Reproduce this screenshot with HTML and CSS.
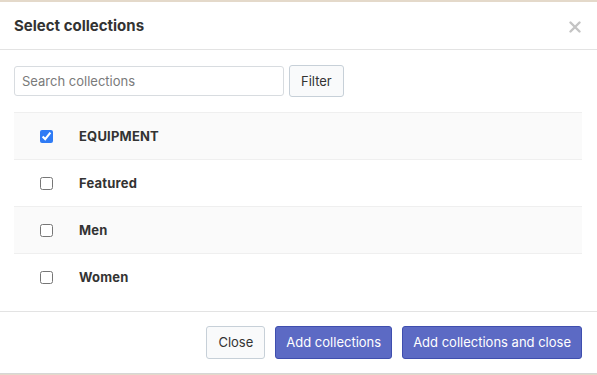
FILE: index.html
```html
<!DOCTYPE html>
<html lang="en">
  <head>
    <meta charset="UTF-8" />
    <meta name="viewport" content="width=device-width, initial-scale=1.0" />
    <title>Select collections</title>
    <link rel="stylesheet" href="styles.css">
  </head>
  <body>
    <div class="modal">
      <div class="modal-header">
        <h2 class="modal-title">Select collections</h2>
        <button class="modal-close" aria-label="Close">
          <svg width="12" height="12" viewBox="0 0 12 12">
            <path d="M1.5 1.5 L10.5 10.5 M10.5 1.5 L1.5 10.5" stroke="#c4c4c4" stroke-width="2.4" stroke-linecap="round" />
          </svg>
        </button>
      </div>

      <div class="modal-body">
        <div class="search-row">
          <input type="text" class="search-input" placeholder="Search collections" />
          <button class="btn">Filter</button>
        </div>

        <table class="collections">
          <tbody>
            <tr>
              <td class="check-cell"><input type="checkbox" checked /></td>
              <td class="name-cell">EQUIPMENT</td>
            </tr>
            <tr>
              <td class="check-cell"><input type="checkbox" /></td>
              <td class="name-cell">Featured</td>
            </tr>
            <tr>
              <td class="check-cell"><input type="checkbox" /></td>
              <td class="name-cell">Men</td>
            </tr>
            <tr>
              <td class="check-cell"><input type="checkbox" /></td>
              <td class="name-cell">Women</td>
            </tr>
          </tbody>
        </table>
      </div>

      <div class="modal-footer">
        <button class="btn">Close</button>
        <button class="btn btn-primary">Add collections</button>
        <button class="btn btn-primary">Add collections and close</button>
      </div>
    </div>
  </body>
</html>
```

FILE: styles.css
```css
* {
  margin: 0;
  padding: 0;
  box-sizing: border-box;
}

body {
  font-family: Inter, "Noto Sans", "Liberation Sans", sans-serif;
  background: #e4d9ca;
  color: #333;
  height: 100vh;
  padding-top: 2px;
}

.modal {
  background: white;
  height: 372px;
  border-bottom: 1px solid #d6d6d6;
  display: flex;
  flex-direction: column;
}

.modal-header {
  height: 48px;
  padding: 0 14px;
  display: flex;
  align-items: center;
  justify-content: space-between;
  border-bottom: 1px solid #e3e3e3;
}

.modal-title {
  font-size: 15px;
  font-weight: 700;
  color: #333;
}

.modal-close {
  background: none;
  border: none;
  width: 16px;
  height: 16px;
  margin-right: 0;
  margin-top: 3px;
  display: flex;
  align-items: center;
  justify-content: center;
  cursor: pointer;
}

.modal-body {
  padding: 15px 15px 10px 14px;
}

.search-row {
  display: flex;
  align-items: center;
  gap: 5px;
  margin-bottom: 15px;
}

.search-input {
  width: 270px;
  height: 30px;
  padding: 0 7px;
  border: 1px solid #d8dce0;
  border-radius: 3px;
  font-family: inherit;
  font-size: 13px;
  color: #333;
  outline: none;
}

.search-input::placeholder {
  color: #7a7a7a;
}

.btn {
  height: 32px;
  padding: 0 11px;
  background: #f9fafb;
  border: 1px solid #c7d0d8;
  border-radius: 3px;
  font-family: inherit;
  font-size: 13px;
  color: #333;
  cursor: pointer;
}

.btn-primary {
  background: #5c6ac4;
  border-color: #3f4eae;
  color: white;
}

.collections {
  width: 100%;
  border-collapse: collapse;
}

.collections tr {
  height: 47px;
  border-top: 1px solid #efefef;
}

.collections tr:nth-child(odd) {
  background: #fafafa;
}

.check-cell {
  width: 65px;
  padding-left: 26px;
  vertical-align: middle;
}

.check-cell input {
  width: 13px;
  height: 13px;
  display: block;
  accent-color: #2f7bf5;
}

.name-cell {
  font-size: 13px;
  font-weight: 700;
  color: #333;
  letter-spacing: 0.2px;
}

.modal-footer {
  border-top: 1px solid #e3e3e3;
  flex: 1;
  display: flex;
  justify-content: flex-end;
  align-items: center;
  gap: 10px;
  padding: 0 15px 0 14px;
}

.modal-footer .btn {
  height: 33px;
}

.modal-footer .btn-primary {
  padding: 0 10px;
}
```
